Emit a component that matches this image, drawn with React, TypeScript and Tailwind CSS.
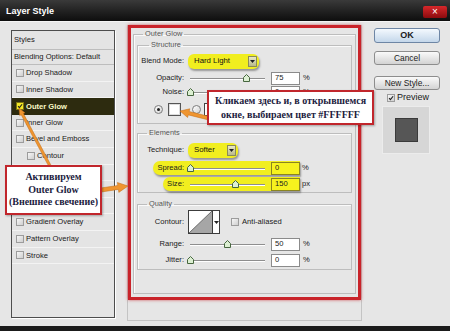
import React from 'react'

const styleRows = [
  { name: 'Drop Shadow' },
  { name: 'Inner Shadow' },
  { name: 'Outer Glow', on: true },
  { name: 'Inner Glow' },
  { name: 'Bevel and Emboss' },
  { name: 'Contour', sub: true },
  { name: 'Texture', sub: true },
  { name: 'Satin' },
  { name: 'Color Overlay' },
  { name: 'Gradient Overlay' },
  { name: 'Pattern Overlay' },
  { name: 'Stroke' },
]

// polygon for a fat annotation arrow
function arrowPts(x1: number, y1: number, x2: number, y2: number, w: number, hl: number, hw: number) {
  const dx = x2 - x1
  const dy = y2 - y1
  const len = Math.hypot(dx, dy)
  const ux = dx / len
  const uy = dy / len
  const px = -uy
  const py = ux
  const bx = x2 - ux * hl
  const by = y2 - uy * hl
  const pts = [
    [x1 + (px * w) / 2, y1 + (py * w) / 2],
    [bx + (px * w) / 2, by + (py * w) / 2],
    [bx + (px * hw) / 2, by + (py * hw) / 2],
    [x2, y2],
    [bx - (px * hw) / 2, by - (py * hw) / 2],
    [bx - (px * w) / 2, by - (py * w) / 2],
    [x1 - (px * w) / 2, y1 - (py * w) / 2],
  ]
  return pts.map((p) => p.map((n) => n.toFixed(1)).join(',')).join(' ')
}

function Check({ on = false, yellow = false }: { on?: boolean; yellow?: boolean }) {
  return (
    <span
      className={
        'flex h-[8px] w-[8px] shrink-0 items-center justify-center border ' +
        (yellow
          ? 'border-[#7c7410] bg-[#f3e826]'
          : 'border-[#9c9c9c] bg-gradient-to-br from-[#f7f7f7] to-[#cfcfcf]')
      }
    >
      {on && (
        <svg width="8" height="8" viewBox="0 0 8 8">
          <path d="M1.4 4.2 L3.2 6.2 L6.8 1.6" fill="none" stroke="#1e1e1e" strokeWidth="1.4" />
        </svg>
      )}
    </span>
  )
}

function Radio({ on = false }: { on?: boolean }) {
  return (
    <span className="flex h-[9px] w-[9px] shrink-0 items-center justify-center rounded-full border border-[#7d7d7d] bg-gradient-to-br from-white to-[#d2d2d2]">
      {on && <span className="h-[3px] w-[3px] rounded-full bg-[#222]" />}
    </span>
  )
}

function Slider({ value, max = 100 }: { value: number; max?: number }) {
  const left = 2 + (75 * value) / max - 3.5
  return (
    <div className="relative h-[10px] w-[79px] shrink-0">
      <div className="absolute left-[2px] right-[2px] top-[5px] h-[2px] border-t border-b border-t-[#8e8e8e] border-b-white" />
      <svg className="absolute top-[1px]" style={{ left }} width="7" height="8" viewBox="0 0 7 8">
        <path d="M0.5 3.5 L3.5 0.5 L6.5 3.5 V7.5 H0.5 Z" fill="#dcefd2" stroke="#47663f" strokeWidth="1" />
      </svg>
    </div>
  )
}

function Field({ value, yellow = false }: { value: string; yellow?: boolean }) {
  return (
    <span
      className={
        'ml-[4px] flex h-[13px] w-[29px] shrink-0 items-center border pl-[3px] ' +
        (yellow ? 'border-[#8a8420] bg-[#f6f21e]' : 'border-[#8b8b8b] bg-white')
      }
    >
      {value}
    </span>
  )
}

function DropArrow() {
  return (
    <span className="flex h-[11px] w-[9px] items-center justify-center border border-[#8a8a5a] bg-gradient-to-b from-[#e9e9c8] to-[#b9b98a]">
      <svg width="5" height="3" viewBox="0 0 5 3">
        <path d="M0 0 H5 L2.5 3 Z" fill="#222" />
      </svg>
    </span>
  )
}

function YellowSelect({ text, width }: { text: string; width: string }) {
  return (
    <div
      className={
        'ml-[4px] flex h-[15px] items-center justify-between rounded-[6px] bg-[#f1ee1f] pl-[6px] pr-[2px] shadow-[1px_2px_2px_rgba(0,0,0,0.35)] ' +
        width
      }
    >
      <span className="text-[7.8px] text-[#111]">{text}</span>
      <DropArrow />
    </div>
  )
}

function Group({ title, indent, className = '', children }: { title: string; indent: string; className?: string; children: React.ReactNode }) {
  return (
    <fieldset className={'border border-[#bdbdbd] shadow-[inset_1px_1px_0_#fafafa] ' + className}>
      <legend className={'px-[2px] text-[7.4px] leading-[10px] text-[#555] ' + indent}>{title}</legend>
      {children}
    </fieldset>
  )
}

function Button({ label, primary = false, className = '' }: { label: string; primary?: boolean; className?: string }) {
  return (
    <div
      className={
        'flex w-[66px] items-center justify-center rounded-[3px] border text-[#1b1b1b] ' +
        (primary
          ? 'h-[15px] border-[#6e86a5] bg-gradient-to-b from-[#f4f9fe] to-[#c4d7ea] text-[9px] font-bold'
          : 'h-[14px] border-[#8d8d8d] bg-gradient-to-b from-[#fafafa] to-[#d3d3d3] text-[8.4px]') +
        ' ' +
        className
      }
    >
      {label}
    </div>
  )
}

export default function App() {
  return (
    <div className="relative flex h-[331px] w-[450px] flex-col overflow-hidden bg-[#111] font-['Liberation_Sans',Arial,sans-serif] text-[7.6px] leading-none text-[#202020]">
      {/* title bar */}
      <div className="flex h-[21px] shrink-0 items-center justify-between bg-gradient-to-b from-[#3a3a3a] to-[#0e0e0e] pl-[6px] pr-[3px] pt-[2px]">
        <span className="text-[9px] font-bold text-white">Layer Style</span>
        <span className="flex h-[12px] w-[24px] items-center justify-center rounded-[2px] bg-gradient-to-b from-[#d8272a] to-[#8c0b0e] text-[10px] text-white">
          ×
        </span>
      </div>

      {/* dialog body */}
      <div className="flex h-[305px] shrink-0 border-t border-[#f4f4f4] bg-[#e6e6e6]">
        {/* styles list */}
        <div className="ml-[11px] mt-[8px] flex h-[288px] w-[104px] shrink-0 flex-col border border-[#4d4d4d] bg-[#e4e4e4] shadow-[1px_1px_0_#fff]">
          <div className="flex h-[19px] items-center border-b border-[#bdbdbd] pl-[2px]">Styles</div>
          <div className="flex h-[15px] items-center border-b border-[#bdbdbd] pl-[2px]">Blending Options: Default</div>
          {styleRows.map((r) =>
            r.on ? (
              <div key={r.name} className="flex h-[16.6px] items-center gap-[2px] bg-[#2d2b0f] pl-[4px] font-bold text-[#fafac8]">
                <Check on yellow />
                {r.name}
              </div>
            ) : (
              <div
                key={r.name}
                className={'flex h-[16.6px] items-center gap-[2px] border-b border-[#f3f3f3] ' + (r.sub ? 'pl-[15px]' : 'pl-[4px]')}
              >
                <Check />
                {r.name}
              </div>
            )
          )}
        </div>

        {/* middle panel */}
        <div className="ml-[12px] mt-[3px] flex h-[296px] w-[235px] shrink-0 flex-col border-x border-b border-[#c4c4c4]">
          <div className="h-[275px] w-full border-[3px] border-[#c9232a] shadow-[0_0_3px_rgba(200,30,40,0.7)] px-[2px] pt-[1px]">
            <Group title="Outer Glow" indent="ml-[6px]" className="h-[265px] px-[3px]">
              <Group title="Structure" indent="ml-[11px]" className="mt-[1px] pb-[6px] pt-[3px]">
                <div className="flex h-[16px] items-center">
                  <span className="w-[46px] text-right">Blend Mode:</span>
                  <YellowSelect text="Hard Light" width="w-[71px]" />
                </div>
                <div className="mt-[2px] flex h-[14px] items-center">
                  <span className="mr-[4px] w-[46px] text-right">Opacity:</span>
                  <Slider value={75} />
                  <Field value="75" />
                  <span className="ml-[3px]">%</span>
                </div>
                <div className="flex h-[14px] items-center">
                  <span className="mr-[4px] w-[46px] text-right">Noise:</span>
                  <Slider value={0} />
                  <Field value="0" />
                  <span className="ml-[3px]">%</span>
                </div>
                <div className="mt-[2px] flex h-[16px] items-center">
                  <span className="w-[16px]" />
                  <Radio on />
                  <span className="ml-[5px] h-[13px] w-[13px] border border-[#555] bg-white shadow-[inset_0_0_0_1px_#ddd]" />
                  <span className="ml-[11px]">
                    <Radio />
                  </span>
                  <span className="ml-[3px] h-[13px] w-[50px] border border-[#444] bg-gradient-to-r from-white to-[#e0e0e0]" />
                </div>
              </Group>

              <Group title="Elements" indent="ml-[9px]" className="mt-[4px] pb-[1px] pt-[4px]">
                <div className="flex h-[16px] items-center">
                  <span className="w-[46px] text-right">Technique:</span>
                  <YellowSelect text="Softer" width="w-[50px]" />
                </div>
                <div className="mt-[3px] flex h-[14px] items-center">
                  <span className="w-[15px]" />
                  <div className="flex h-[14px] items-center rounded-l-full rounded-r-[5px] bg-[#f1ee1f] shadow-[1px_2px_2px_rgba(0,0,0,0.35)]">
                    <span className="mr-[4px] w-[31px] text-right">Spread:</span>
                    <Slider value={0} />
                    <Field value="0" yellow />
                  </div>
                  <span className="ml-[2px]">%</span>
                </div>
                <div className="mt-[2px] flex h-[14px] items-center">
                  <span className="w-[25px]" />
                  <div className="flex h-[14px] items-center rounded-l-full rounded-r-[5px] bg-[#f1ee1f] shadow-[1px_2px_2px_rgba(0,0,0,0.35)]">
                    <span className="mr-[4px] w-[21px] text-right">Size:</span>
                    <Slider value={150} max={250} />
                    <Field value="150" yellow />
                  </div>
                  <span className="ml-[2px]">px</span>
                </div>
              </Group>

              <Group title="Quality" indent="ml-[9px]" className="mt-[6px] pb-[2px] pt-[1px]">
                <div className="flex h-[24px] items-center">
                  <span className="w-[46px] text-right">Contour:</span>
                  <div className="ml-[4px] flex h-[24px] w-[32px] border border-[#3c3c3c] bg-white">
                    <svg width="23" height="22" viewBox="0 0 23 22" className="shrink-0">
                      <path d="M0 22 L23 0 V22 Z" fill="#a6a6a6" />
                      <path d="M0 22 L23 0" stroke="#555" strokeWidth="0.8" />
                    </svg>
                    <span className="flex flex-1 items-center justify-center border-l border-[#3c3c3c]">
                      <svg width="5" height="3" viewBox="0 0 5 3">
                        <path d="M0 0 H5 L2.5 3 Z" fill="#222" />
                      </svg>
                    </span>
                  </div>
                  <span className="ml-[11px] flex items-center gap-[3px]">
                    <Check />
                    Anti-aliased
                  </span>
                </div>
                <div className="mt-[3px] flex h-[14px] items-center">
                  <span className="mr-[4px] w-[46px] text-right">Range:</span>
                  <Slider value={50} />
                  <Field value="50" />
                  <span className="ml-[3px]">%</span>
                </div>
                <div className="mt-[2px] flex h-[14px] items-center">
                  <span className="mr-[4px] w-[46px] text-right">Jitter:</span>
                  <Slider value={0} />
                  <Field value="0" />
                  <span className="ml-[3px]">%</span>
                </div>
              </Group>
            </Group>
          </div>
        </div>

        {/* buttons + preview */}
        <div className="ml-[12px] mt-[6px] flex w-[66px] shrink-0 flex-col">
          <Button label="OK" primary />
          <Button label="Cancel" className="mt-[8px]" />
          <Button label="New Style..." className="mt-[11px]" />
          <div className="ml-[13px] mt-[3px] flex items-center gap-[2px] text-[9px]">
            <Check on />
            Preview
          </div>
          <div className="ml-[8px] mt-[4px] flex h-[48px] w-[48px] items-center justify-center border border-[#ececec] bg-[#d6d6d6]">
            <div className="h-[24px] w-[23px] border border-[#3a3a3a] bg-[#565656]" />
          </div>
        </div>
      </div>

      {/* bottom strip */}
      <div className="h-[5px] shrink-0 bg-[#1b1b1b]" />

      {/* annotation arrows */}
      <svg className="pointer-events-none absolute left-0 top-0" width="450" height="331" viewBox="0 0 450 331">
        <polygon points={arrowPts(50, 166, 19, 108, 2.5, 7, 6)} fill="#ef9530" stroke="#c06a14" strokeWidth="0.5" />
        <polygon points={arrowPts(101, 190, 128, 186, 4, 10, 10)} fill="#ef9530" stroke="#c06a14" strokeWidth="0.5" />
        <polygon points={arrowPts(208, 118, 180, 111, 3.5, 9, 9)} fill="#ef9530" stroke="#c06a14" strokeWidth="0.5" />
      </svg>

      {/* callouts */}
      <div className="absolute left-[5px] top-[165px] flex h-[50px] w-[97px] flex-col items-center justify-center border-2 border-[#c1262c] bg-white font-['Liberation_Serif',serif] text-[10px] font-bold leading-[12.5px] text-[#1c1c3e] shadow-[1px_1px_2px_rgba(0,0,0,0.3)]">
        <span>Активируем</span>
        <span>Outer Glow</span>
        <span>(Внешнее свечение)</span>
      </div>
      <div className="absolute left-[207px] top-[90px] flex h-[35px] w-[167px] flex-col items-center justify-center border-2 border-[#c1262c] bg-white font-['Liberation_Serif',serif] text-[10px] font-bold leading-[14px] text-[#1c1c3e] shadow-[1px_1px_2px_rgba(0,0,0,0.3)]">
        <span>Кликаем здесь и, в открывшемся</span>
        <span>окне, выбираем цвет #FFFFFF</span>
      </div>
    </div>
  )
}
